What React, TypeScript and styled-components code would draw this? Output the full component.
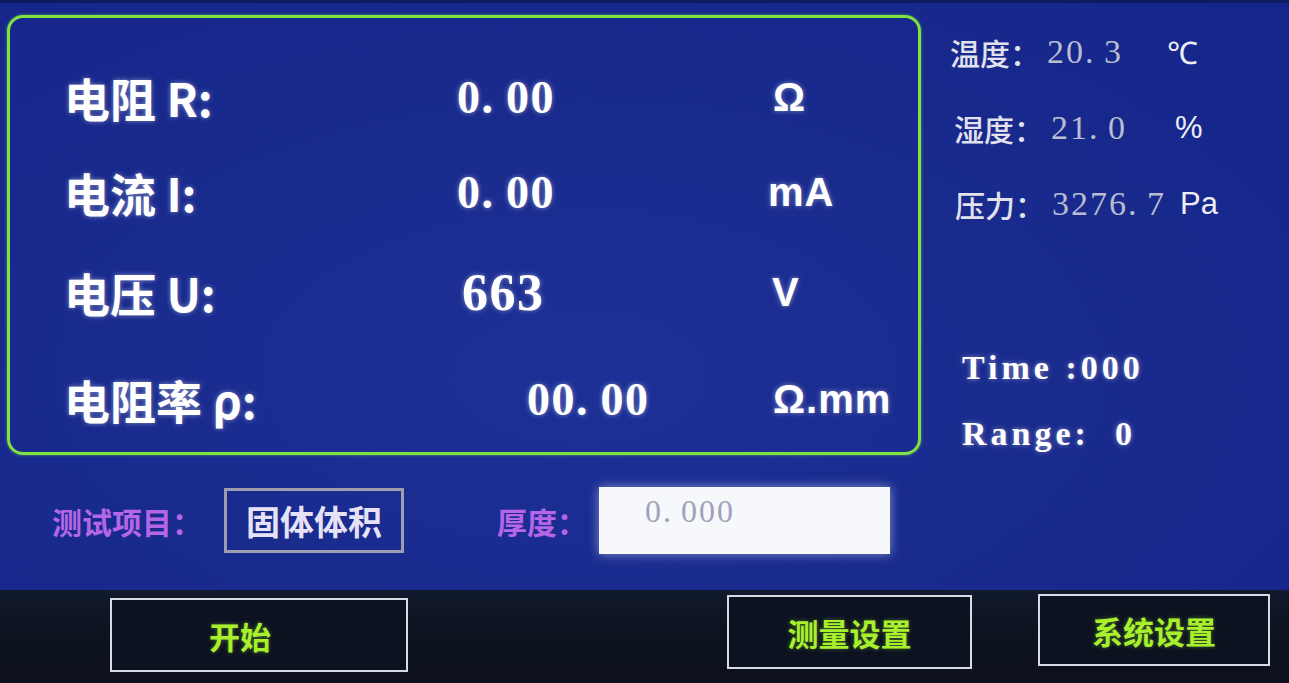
import styled, { createGlobalStyle } from "styled-components";

const GlobalStyle = createGlobalStyle`
  html, body {
    margin: 0;
    padding: 0;
    background: #0e1522;
  }
  #root {
    width: 1289px;
    height: 683px;
    overflow: hidden;
  }
`;

const Screen = styled.div`
  width: 1289px;
  height: 683px;
  display: flex;
  flex-direction: column;
  box-sizing: border-box;
  border-top: 3px solid #0d1c62;
  background: radial-gradient(
      ellipse at 45% 55%,
      #1d3096 0%,
      #1a2b8e 45%,
      #15258a 100%
    );
  font-family: "Noto Sans CJK SC", "Liberation Sans", sans-serif;
`;

const Main = styled.div`
  flex: 1;
  display: flex;
  flex-direction: column;
`;

const Upper = styled.div`
  display: flex;
  padding: 12px 0 0 7px;
  gap: 29px;
`;

const Panel = styled.div`
  width: 914px;
  height: 440px;
  box-sizing: border-box;
  border: 3px solid #80e23e;
  border-radius: 16px;
  padding-left: 54px;
  display: flex;
  flex-direction: column;
  box-shadow: 0 0 3px rgba(140, 240, 80, 0.6);
`;

const MeasureRow = styled.div<{ $top: number }>`
  display: grid;
  grid-template-columns: 393px 311px auto;
  align-items: center;
  height: 60px;
  margin-top: ${(p) => p.$top}px;
`;

const glow = "0 0 5px rgba(255, 255, 255, 0.45)";

const Label = styled.div`
  font-family: "Noto Sans CJK SC", "Liberation Sans", sans-serif;
  font-weight: 700;
  font-size: 46px;
  color: #ffffff;
  text-shadow: ${glow};
  white-space: pre;
`;

const Value = styled.div<{ $indent?: number; $size?: number }>`
  font-family: "Liberation Serif", serif;
  font-weight: 700;
  font-size: ${(p) => p.$size ?? 46}px;
  letter-spacing: 1.5px;
  color: #ffffff;
  text-shadow: ${glow};
  padding-left: ${(p) => p.$indent ?? 0}px;
`;

const Dot = styled.span`
  padding-right: 0.25em;
`;

const Unit = styled.div<{ $indent?: number }>`
  font-family: "Liberation Sans", sans-serif;
  font-weight: 700;
  font-size: 40px;
  letter-spacing: 1px;
  color: #ffffff;
  text-shadow: ${glow};
  padding-left: ${(p) => p.$indent ?? 0}px;
`;

const Side = styled.div`
  display: flex;
  flex-direction: column;
  padding-top: 15px;
`;

const EnvList = styled.div`
  display: flex;
  flex-direction: column;
  gap: 36px;
`;

const EnvRow = styled.div<{ $indent?: number }>`
  display: grid;
  grid-template-columns: 97px 120px auto;
  align-items: center;
  height: 40px;
  padding-left: ${(p) => p.$indent ?? 0}px;
`;

const EnvLabel = styled.div`
  font-size: 30px;
  font-weight: 500;
  color: #e2e2ee;
  white-space: pre;
`;

const EnvValue = styled.div`
  font-family: "Liberation Serif", serif;
  font-size: 34px;
  letter-spacing: 2px;
  color: #b9bdd0;
  white-space: nowrap;
`;

const EnvUnit = styled.div<{ $indent?: number }>`
  font-family: "Liberation Sans", sans-serif;
  font-size: 31px;
  color: #eeeef6;
  padding-left: ${(p) => p.$indent ?? 0}px;
`;

const StatusList = styled.div`
  display: flex;
  flex-direction: column;
  gap: 26px;
  margin-top: 126px;
  padding-left: 12px;
`;

const StatusLine = styled.div`
  height: 40px;
  display: flex;
  align-items: center;
  font-family: "Liberation Serif", serif;
  font-weight: 700;
  font-size: 34px;
  letter-spacing: 4px;
  color: #ffffff;
  text-shadow: ${glow};
  white-space: pre;
`;

const FormRow = styled.div`
  display: flex;
  align-items: center;
  margin-top: 32px;
  padding-left: 52px;
`;

const FormLabel = styled.div<{ $gap: number }>`
  font-size: 30px;
  font-weight: 700;
  color: #b466e6;
  margin-right: ${(p) => p.$gap}px;
  white-space: pre;
`;

const ItemBox = styled.div`
  width: 180px;
  height: 65px;
  box-sizing: border-box;
  border: 3px solid #9d9db0;
  display: flex;
  align-items: center;
  justify-content: center;
  font-size: 34px;
  font-weight: 700;
  color: #e6e2f6;
  margin-right: 93px;
`;

const ThicknessInput = styled.div`
  width: 291px;
  height: 67px;
  box-sizing: border-box;
  background: #f6f8fc;
  box-shadow: 0 0 10px rgba(220, 230, 255, 0.55);
  padding: 6px 0 0 46px;
  font-family: "Liberation Serif", serif;
  font-size: 32px;
  letter-spacing: 2px;
  color: #9fa2b8;
`;

const BottomBar = styled.div`
  height: 93px;
  display: flex;
  align-items: flex-start;
  background: linear-gradient(180deg, #111a2e 0%, #0d1320 40%, #0c111c 100%);
`;

const ActionButton = styled.div<{
  $width: number;
  $height: number;
  $top: number;
  $left: number;
  $shift?: number;
}>`
  width: ${(p) => p.$width}px;
  height: ${(p) => p.$height}px;
  margin-top: ${(p) => p.$top}px;
  margin-left: ${(p) => p.$left}px;
  box-sizing: border-box;
  border: 2px solid #d6dae2;
  background: #0c1220;
  display: flex;
  align-items: center;
  justify-content: center;
  padding-right: ${(p) => p.$shift ?? 0}px;
  font-size: 31px;
  font-weight: 700;
  color: #a8f02c;
  text-shadow: 0 0 4px rgba(170, 240, 60, 0.4);
`;

const Num = ({ text }: { text: string }) => {
  const [whole, frac] = text.split(".");
  if (frac === undefined) return <>{whole}</>;
  return (
    <>
      {whole}
      <Dot>.</Dot>
      {frac}
    </>
  );
};

const measures = [
  { label: "电阻 R:", value: "0.00", unit: "Ω", top: 46, unitIndent: 5 },
  { label: "电流 I:", value: "0.00", unit: "mA", top: 35 },
  { label: "电压 U:", value: "663", unit: "V", top: 40, size: 52, indent: 5, unitIndent: 4 },
  { label: "电阻率 ρ:", value: "00.00", unit: "Ω.mm", top: 47, indent: 70, unitIndent: 5 },
];

const env = [
  { label: "温度：", value: "20.3", unit: "℃", indent: 0, unitIndent: 0 },
  { label: "湿度：", value: "21.0", unit: "%", indent: 4, unitIndent: 4 },
  { label: "压力：", value: "3276.7", unit: "Pa", indent: 5, unitIndent: 8 },
];

export default function App() {
  return (
    <>
      <GlobalStyle />
      <Screen>
        <Main>
          <Upper>
            <Panel>
              {measures.map((m) => (
                <MeasureRow key={m.label} $top={m.top}>
                  <Label>{m.label}</Label>
                  <Value $indent={m.indent} $size={m.size}>
                    <Num text={m.value} />
                  </Value>
                  <Unit $indent={m.unitIndent}>{m.unit}</Unit>
                </MeasureRow>
              ))}
            </Panel>
            <Side>
              <EnvList>
                {env.map((e) => (
                  <EnvRow key={e.label} $indent={e.indent}>
                    <EnvLabel>{e.label}</EnvLabel>
                    <EnvValue>
                      <Num text={e.value} />
                    </EnvValue>
                    <EnvUnit $indent={e.unitIndent}>{e.unit}</EnvUnit>
                  </EnvRow>
                ))}
              </EnvList>
              <StatusList>
                <StatusLine>Time :000</StatusLine>
                <StatusLine>Range:  0</StatusLine>
              </StatusList>
            </Side>
          </Upper>
          <FormRow>
            <FormLabel $gap={22}>测试项目：</FormLabel>
            <ItemBox>固体体积</ItemBox>
            <FormLabel $gap={12}>厚度：</FormLabel>
            <ThicknessInput>
              <Num text="0.000" />
            </ThicknessInput>
          </FormRow>
        </Main>
        <BottomBar>
          <ActionButton $width={298} $height={74} $top={8} $left={110} $shift={38}>
            开始
          </ActionButton>
          <ActionButton $width={245} $height={74} $top={5} $left={319}>
            测量设置
          </ActionButton>
          <ActionButton $width={232} $height={72} $top={4} $left={66}>
            系统设置
          </ActionButton>
        </BottomBar>
      </Screen>
    </>
  );
}
